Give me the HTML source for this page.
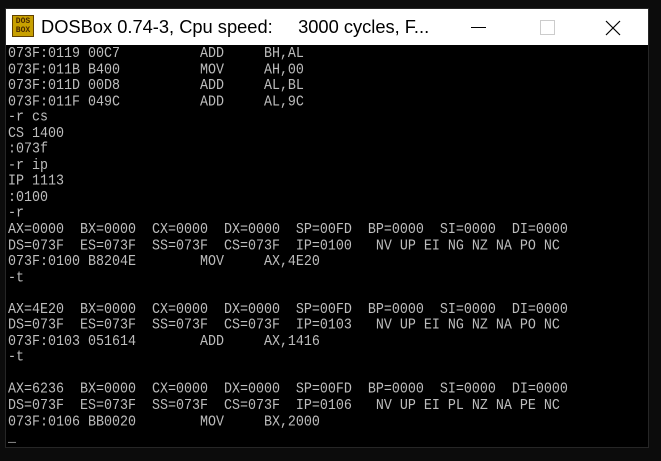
<!DOCTYPE html>
<html><head><style>
html,body{margin:0;width:661px;height:461px;background:#0c0c0c;overflow:hidden;position:relative}
.win{position:absolute;left:5px;top:8px;width:642px;height:438px;border:1px solid #262626;background:#000;overflow:hidden}
.title{position:absolute;left:0;top:0;width:642px;height:36px;background:#fff;z-index:2}
.icon{position:absolute;left:6px;top:6px;width:22px;height:22px;background:#c8a000;border:1px solid #604000;font:bold 8px "Liberation Mono",monospace;color:#4a2a00;line-height:9px;text-align:center;box-sizing:border-box;padding-top:1px}
.tt{position:absolute;left:35px;top:7px;font:18.3px "Liberation Sans",sans-serif;color:#000;white-space:pre}
pre{position:absolute;left:2px;top:38px;margin:0;font:13.33px/14.545px "Liberation Mono",monospace;color:#bdbdbd;transform:scaleY(1.1);transform-origin:0 0}
</style></head><body>
<div class="win">
<div class="title">
<div class="icon">DOS<br>BOX</div>
<div class="tt">DOSBox 0.74-3, Cpu speed:     3000 cycles, F...</div>
<div style="position:absolute;left:465px;top:18px;width:15px;height:1px;background:#000"></div>
<div style="position:absolute;left:534px;top:11px;width:13px;height:13px;border:1px solid #ccc"></div>
<svg style="position:absolute;left:599px;top:11px" width="16" height="16"><path d="M1 1L15 15M15 1L1 15" stroke="#000" stroke-width="1.2"/></svg>
</div>
<pre>073F:0119 00C7          ADD     BH,AL
073F:011B B400          MOV     AH,00
073F:011D 00D8          ADD     AL,BL
073F:011F 049C          ADD     AL,9C
-r cs
CS 1400
:073f
-r ip
IP 1113
:0100
-r
AX=0000  BX=0000  CX=0000  DX=0000  SP=00FD  BP=0000  SI=0000  DI=0000
DS=073F  ES=073F  SS=073F  CS=073F  IP=0100   NV UP EI NG NZ NA PO NC
073F:0100 B8204E        MOV     AX,4E20
-t

AX=4E20  BX=0000  CX=0000  DX=0000  SP=00FD  BP=0000  SI=0000  DI=0000
DS=073F  ES=073F  SS=073F  CS=073F  IP=0103   NV UP EI NG NZ NA PO NC
073F:0103 051614        ADD     AX,1416
-t

AX=6236  BX=0000  CX=0000  DX=0000  SP=00FD  BP=0000  SI=0000  DI=0000
DS=073F  ES=073F  SS=073F  CS=073F  IP=0106   NV UP EI PL NZ NA PE NC
073F:0106 BB0020        MOV     BX,2000
_</pre>
</div>
</body></html>
